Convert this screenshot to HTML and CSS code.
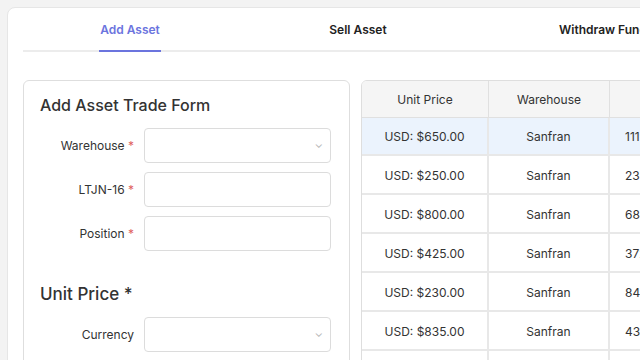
FILE: index.html
```html
<!DOCTYPE html>
<html>
<head>
<meta charset="utf-8">
<link rel="stylesheet" href="styles.css">
</head>
<body>
<div class="card">
  <div class="tabs">
    <div class="tab active"><span class="tab-label">Add Asset</span></div>
    <div class="tab"><span class="tab-label">Sell Asset</span></div>
    <div class="tab"><span class="tab-label">Withdraw Funds</span></div>
  </div>
  <div class="content">
    <div class="form-card">
      <h2 class="form-title">Add Asset Trade Form</h2>
      <div class="field">
        <label class="label">Warehouse <span class="req">*</span></label>
        <div class="input select"><span class="chev">&#8964;</span></div>
      </div>
      <div class="field">
        <label class="label">LTJN-16 <span class="req">*</span></label>
        <div class="input"></div>
      </div>
      <div class="field">
        <label class="label">Position <span class="req">*</span></label>
        <div class="input"></div>
      </div>
      <h3 class="section-title">Unit Price *</h3>
      <div class="field">
        <label class="label">Currency</label>
        <div class="input select"><span class="chev">&#8964;</span></div>
      </div>
    </div>
    <div class="table">
      <div class="row head">
        <div class="cell c1">Unit Price</div>
        <div class="cell c2">Warehouse</div>
        <div class="cell c3"></div>
      </div>
      <div class="row selected">
        <div class="cell c1">USD: $650.00</div>
        <div class="cell c2">Sanfran</div>
        <div class="cell c3">1119</div>
      </div>
      <div class="row">
        <div class="cell c1">USD: $250.00</div>
        <div class="cell c2">Sanfran</div>
        <div class="cell c3">235</div>
      </div>
      <div class="row">
        <div class="cell c1">USD: $800.00</div>
        <div class="cell c2">Sanfran</div>
        <div class="cell c3">684</div>
      </div>
      <div class="row">
        <div class="cell c1">USD: $425.00</div>
        <div class="cell c2">Sanfran</div>
        <div class="cell c3">372</div>
      </div>
      <div class="row">
        <div class="cell c1">USD: $230.00</div>
        <div class="cell c2">Sanfran</div>
        <div class="cell c3">846</div>
      </div>
      <div class="row">
        <div class="cell c1">USD: $835.00</div>
        <div class="cell c2">Sanfran</div>
        <div class="cell c3">431</div>
      </div>
      <div class="row">
        <div class="cell c1"></div>
        <div class="cell c2"></div>
        <div class="cell c3"></div>
      </div>
    </div>
  </div>
</div>
</body>
</html>
```

FILE: styles.css
```css
* { box-sizing: border-box; }
html, body { margin: 0; padding: 0; }
body {
  background: #f3f3f3;
  font-family: Inter, "Noto Sans", sans-serif;
  color: #333;
  width: 640px;
  height: 360px;
  overflow: hidden;
}
.card {
  margin: 7px 0 0 7px;
  width: 720px;
  height: 420px;
  background: #fff;
  border: 1px solid #e6e6e6;
  border-radius: 8px;
  padding: 0 15px;
}
.tabs {
  display: flex;
  height: 44px;
  border-bottom: 2px solid #ececec;
}
.tab {
  width: 228px;
  flex: none;
  display: flex;
  justify-content: center;
  align-items: stretch;
  font-size: 12px;
  font-weight: 600;
  color: #222;
}
.tab:first-child { margin-left: -7px; }
.tab:last-child {
  justify-content: flex-start;
  padding-left: 86px;
}
.tab-label {
  display: flex;
  align-items: center;
  padding: 0 1px;
  margin-bottom: -2px;
  border-bottom: 2px solid transparent;
  white-space: nowrap;
}
.tab.active .tab-label {
  color: #6b74de;
  border-bottom-color: #6b74de;
}
.content {
  display: flex;
  gap: 11px;
  margin-top: 28px;
}
.form-card {
  width: 327px;
  flex: none;
  height: 320px;
  border: 1px solid #dedede;
  border-radius: 6px;
  padding: 14px 17px 0 16px;
}
.form-title {
  margin: 0 0 13px;
  font-size: 16px;
  font-weight: 500;
  line-height: 20px;
  color: #333;
}
.field {
  display: flex;
  align-items: center;
  gap: 10px;
  margin-bottom: 9px;
}
.label {
  width: 94px;
  flex: none;
  text-align: right;
  font-size: 12px;
  color: #333;
}
.req { color: #e06060; }
.input {
  width: 187px;
  height: 35px;
  border: 1px solid #dcdcdc;
  border-radius: 4px;
  background: #fff;
  position: relative;
}
.chev {
  position: absolute;
  right: 7px;
  top: 8px;
  font-size: 11px;
  color: #b5b5b5;
}
.section-title {
  margin: 32px 0 12px;
  font-size: 17px;
  font-weight: 500;
  line-height: 22px;
  color: #333;
}
.table {
  flex: none;
  width: 360px;
  border: 1px solid #dedede;
  border-top-left-radius: 6px;
  overflow: hidden;
}
.row {
  display: flex;
  height: 39px;
  border-bottom: 2px solid #e8e8e8;
}
.row.head {
  height: 37px;
  background: #f5f5f5;
  border-bottom: 1px solid #e0e0e0;
}
.row.selected { background: #ebf3fd; height: 38px; }
.cell {
  display: flex;
  align-items: center;
  justify-content: center;
  font-size: 12px;
  color: #333;
  border-right: 2px solid #e8e8e8;
  padding-top: 1px;
}
.row.head .cell { border-right: 1px solid #e0e0e0; padding-top: 0; }
.c1 { width: 127px; }
.c2 { width: 121px; }
.c3 {
  width: 110px;
  border-right: none;
  justify-content: flex-start;
  padding-left: 15px;
  overflow: hidden;
}
```
